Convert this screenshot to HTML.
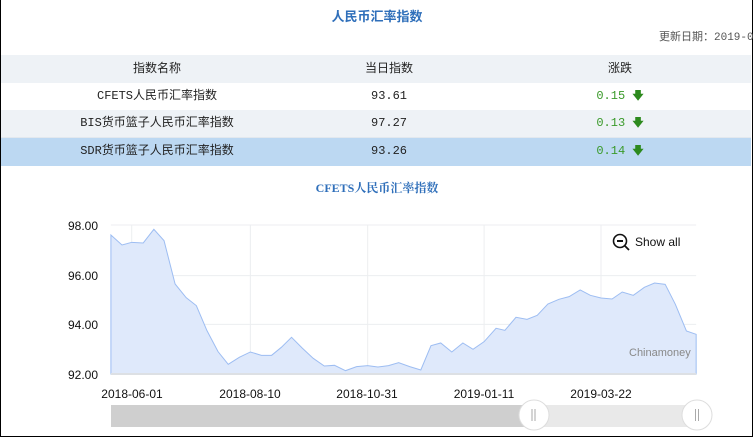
<!DOCTYPE html>
<html><head><meta charset="utf-8"><style>
body{margin:0;width:754px;height:439px;overflow:hidden;background:#fff;font-family:"Liberation Sans","Noto Sans CJK SC",sans-serif;}
.frame{position:absolute;left:0;top:0;width:751px;height:436px;border:1px solid #000;border-top:none;box-sizing:content-box}
.t{position:absolute;white-space:nowrap;font-size:12px;color:#222}
.row{position:absolute;left:1px;width:750px;height:27px}
.c{position:absolute;top:0;line-height:27px;font-size:12px;transform:translateX(-50%);white-space:nowrap;color:#222;font-family:"Liberation Mono","Noto Sans CJK SC",monospace}
.g{color:#3a9a2a}
.ar{color:#2d8a1e;font-weight:bold;font-size:11px}
</style></head><body>
<div class="frame"></div>
<div class="t" style="left:0;width:754px;text-align:center;top:6px;font-size:13px;font-weight:bold;color:#2f6fba">人民币汇率指数</div>
<div class="t" style="left:659px;top:28px;color:#555;font-family:'Liberation Mono','Noto Sans CJK SC',monospace;font-size:11px">更新日期：2019-0</div>
<div class="row" style="top:55px;height:28px;background:#eef2f6;border-bottom:1px solid #e2e8ee">
<div class="c" style="left:156px;line-height:28px">指数名称</div><div class="c" style="left:388px;line-height:28px">当日指数</div><div class="c" style="left:619px;line-height:28px">涨跌</div></div>
<div class="row" style="top:83px;background:#fff;border-bottom:1px solid #e2e8ee">
<div class="c" style="left:156px">CFETS人民币汇率指数</div><div class="c" style="left:388px">93.61</div><div class="c" style="left:619px"><span class="g">0.15</span> <span class="ar">🡇</span></div></div>
<div class="row" style="top:110px;background:#eef2f6;border-bottom:1px solid #e2e8ee">
<div class="c" style="left:156px">BIS货币篮子人民币汇率指数</div><div class="c" style="left:388px">97.27</div><div class="c" style="left:619px"><span class="g">0.13</span> <span class="ar">🡇</span></div></div>
<div class="row" style="top:138px;height:28px;background:#bcd8f2">
<div class="c" style="left:156px">SDR货币篮子人民币汇率指数</div><div class="c" style="left:388px">93.26</div><div class="c" style="left:619px"><span class="g">0.14</span> <span class="ar">🡇</span></div></div>
<div class="t" style="left:0;width:754px;text-align:center;top:179px;font-size:12px;font-weight:bold;color:#2f6fba;font-family:'Liberation Serif','Noto Serif CJK SC',serif">CFETS人民币汇率指数</div>
<svg width="754" height="439" style="position:absolute;left:0;top:0" font-family="Liberation Sans, sans-serif">
<g transform="translate(60,170) scale(0.4427,0.3333)">
<g stroke="#eceef0" stroke-width="1" vector-effect="non-scaling-stroke">
<line x1="115" x2="1437" y1="165" y2="165" vector-effect="non-scaling-stroke"/>
<line x1="115" x2="1437" y1="317" y2="317" vector-effect="non-scaling-stroke"/>
<line x1="115" x2="1437" y1="463" y2="463" vector-effect="non-scaling-stroke"/>
<line x1="162" x2="162" y1="165" y2="612" vector-effect="non-scaling-stroke"/>
<line x1="430" x2="430" y1="165" y2="612" vector-effect="non-scaling-stroke"/>
<line x1="695" x2="695" y1="165" y2="612" vector-effect="non-scaling-stroke"/>
<line x1="958" x2="958" y1="165" y2="612" vector-effect="non-scaling-stroke"/>
<line x1="1222" x2="1222" y1="165" y2="612" vector-effect="non-scaling-stroke"/>
</g>
<path fill="#dfe9fb" stroke="#9dbdf2" stroke-width="1" vector-effect="non-scaling-stroke" d="M115,195 L140,225 162,217 188,219 212,178 235,212 260,342 285,383 308,407 332,482 357,545 380,583 405,562 430,546 455,556 478,556 500,532 523,502 547,534 572,565 597,588 620,586 645,602 670,590 695,587 718,591 742,587 765,578 790,590 815,600 838,527 860,519 885,546 910,519 933,538 958,515 985,475 1005,481 1030,442 1055,448 1078,436 1102,402 1127,388 1150,380 1175,360 1198,376 1222,384 1247,387 1270,366 1295,376 1320,352 1343,339 1367,343 1390,403 1415,483 1437,493 L1437,612 L115,612 Z"/>
<line x1="115" x2="1437" y1="612" y2="612" stroke="#dde0e4" stroke-width="2" vector-effect="non-scaling-stroke"/>
</g>
<g font-size="12" fill="#111" text-anchor="end">
<text x="98" y="230">98.00</text><text x="98" y="280">96.00</text><text x="98" y="329">94.00</text><text x="98" y="379">92.00</text></g>
<g font-size="12" fill="#111" text-anchor="middle">
<text x="132" y="398">2018-06-01</text><text x="250" y="398">2018-08-10</text><text x="367" y="398">2018-10-31</text><text x="484" y="398">2019-01-11</text><text x="601" y="398">2019-03-22</text></g>
<text x="629" y="356" font-size="11" fill="#888">Chinamoney</text>
<circle cx="620" cy="241" r="6.5" fill="none" stroke="#111" stroke-width="1.6"/>
<line x1="617" y1="241" x2="623" y2="241" stroke="#111" stroke-width="2"/>
<line x1="625" y1="246" x2="629" y2="250" stroke="#111" stroke-width="1.8"/>
<text x="635" y="246" font-size="12" fill="#111">Show all</text>
<rect x="111" y="405" width="586" height="22" fill="#e9e9e9"/>
<rect x="111" y="405" width="422" height="22" fill="#cfcfcf"/>
<circle cx="534" cy="415" r="15" fill="#fff" stroke="#ddd"/>
<circle cx="697" cy="415" r="15" fill="#fff" stroke="#ddd"/>
<g stroke="#aaa"><line x1="532" x2="532" y1="409" y2="421"/><line x1="535" x2="535" y1="409" y2="421"/><line x1="695.5" x2="695.5" y1="409" y2="421"/><line x1="698.5" x2="698.5" y1="409" y2="421"/></g>
</svg>
</body></html>
